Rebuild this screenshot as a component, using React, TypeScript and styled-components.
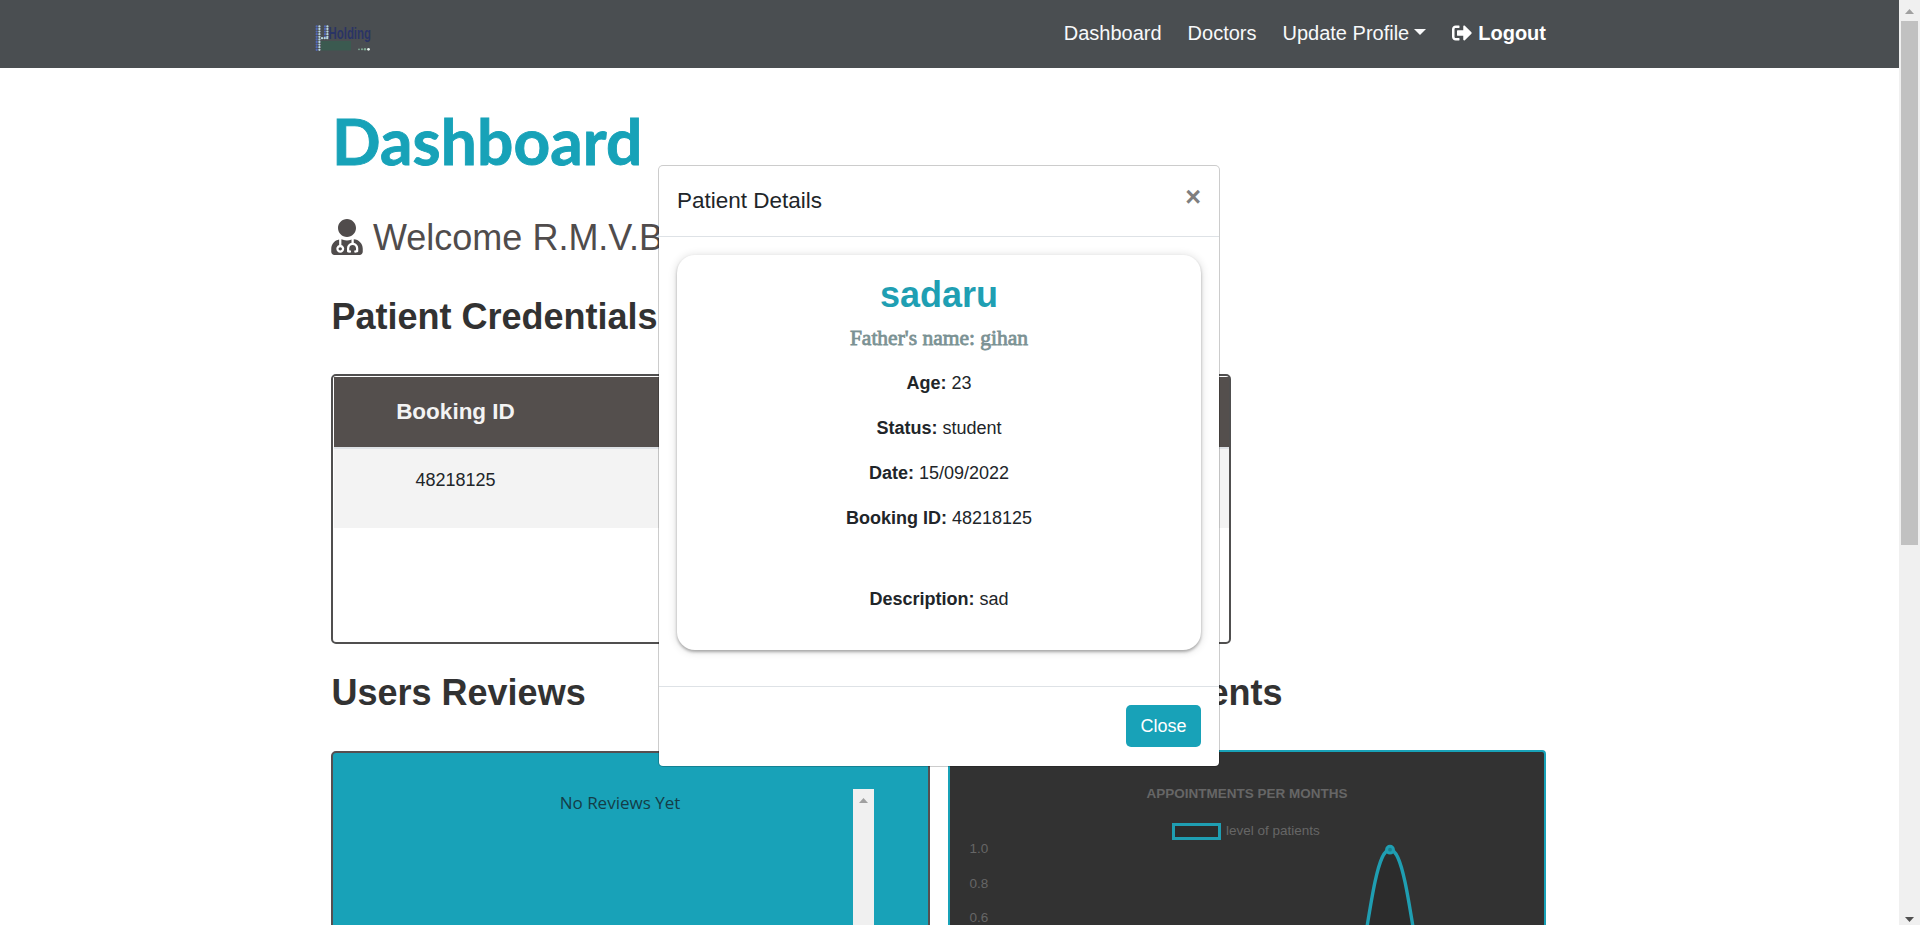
import React from "react";
import styled, { createGlobalStyle } from "styled-components";
import { FaUserMd, FaSignOutAlt } from "react-icons/fa";

const GlobalStyle = createGlobalStyle`
  * { box-sizing: border-box; }
  html, body { margin: 0; height: 925px; overflow: hidden; background: #fff; }
  body { font: 18px/27px "Liberation Sans", Arial, sans-serif; color: #212529; }
  h1, h2, h3, p { margin: 0; }
`;

const Screen = styled.div`
  position: relative;
  display: flex;
  width: 1920px;
  height: 925px;
  overflow: hidden;
`;

const Page = styled.div`
  width: 1899px;
  height: 925px;
  overflow: hidden;
`;

const NavBar = styled.nav`
  display: flex;
  justify-content: space-between;
  align-items: flex-start;
  height: 68px;
  padding: 0 353px 0 314px;
  background: #4a4e51;
`;

const Logo = styled.svg`
  display: block;
  margin-top: 20px;
  overflow: visible;
`;

const NavLinks = styled.div`
  display: flex;
  align-items: center;
  gap: 26px;
  padding-top: 18px;
  font-size: 20px;
  line-height: 30px;
`;

const NavLink = styled.span<{ $strong?: boolean }>`
  display: flex;
  align-items: center;
  font-weight: ${(p) => (p.$strong ? 700 : 400)};
  color: ${(p) => (p.$strong ? "#fff" : "#f8f9fa")};
  svg { margin: 0 6px 1px 0; }
`;

const Caret = styled.i`
  margin: -2px 0 0 5px;
  border: 6px solid transparent;
  border-top-color: #f8f9fa;
  border-bottom: 0;
`;

const Content = styled.main`
  width: 1215px;
  margin-left: 331px;
`;

const PageTitle = styled.h1`
  height: 115px;
  padding: 33px 0 0 1px;
  font: 700 64px/80px Lato, sans-serif;
  letter-spacing: 0.1px;
  color: #17a2b8;
  -webkit-text-stroke: 0.9px #17a2b8;
`;

const Welcome = styled.h2`
  display: flex;
  align-items: center;
  gap: 10px;
  margin: 33px 0 36px;
  font-size: 36px;
  font-weight: 400;
  line-height: 43px;
  color: #504c4c;
  svg { width: 32px; height: 36px; margin-bottom: 2px; }
`;

const SectionTitle = styled.h2`
  padding-left: 0.5px;
  font-size: 36px;
  font-weight: 700;
  line-height: 43px;
  color: #323232;
`;

const TableBox = styled.section`
  width: 900px;
  height: 270px;
  margin: 36px 0 27px;
  padding: 1px 0 0 1px;
  border: 2px solid #504f4f;
  border-radius: 5px;
`;

const TableHead = styled.div`
  display: flex;
  height: 72px;
  padding-top: 18px;
  background: #544f4d;
  border-bottom: 2px solid #dee2e6;
  color: #f3f3f3;
  font-size: 22.5px;
  font-weight: 700;
  line-height: 33px;
`;

const TableRow = styled.div`
  display: flex;
  height: 79px;
  padding-top: 17px;
  background: #f3f3f3;
  line-height: 28px;
`;

const Cell = styled.div`
  width: 243px;
  text-align: center;
`;

const Columns = styled.div`
  display: grid;
  grid-template-columns: 599px 598px;
  column-gap: 18px;
`;

const Reviews = styled.section`
  display: flex;
  height: 400px;
  margin-top: 37px;
  padding: 36px 0 0 54px;
  border: 2px solid #564f50;
  border-radius: 5px;
  background: #18a2b8;
`;

const ReviewText = styled.p`
  width: 466px;
  text-align: center;
  font: 17px/27px "Open Sans", "Noto Sans", sans-serif;
  color: #143d47;
`;

const InnerTrack = styled.div`
  width: 21px;
  background: #f0f0f0;
  svg { display: block; }
`;

const ChartCard = styled.section`
  height: 400px;
  margin-top: 36px;
  border: 2px solid #18a2b8;
  border-radius: 4px;
  background: #323232;
  overflow: hidden;
  svg { display: block; font-family: "Liberation Sans", Arial, sans-serif; font-size: 13.5px; }
`;

const ScrollTrack = styled.div`
  display: flex;
  flex-direction: column;
  align-items: center;
  width: 21px;
  height: 925px;
  background: #f0f0f0;
`;

const ScrollThumb = styled.div`
  width: 17px;
  height: 524px;
  margin-bottom: auto;
  background: #c1c1c1;
`;

const Modal = styled.div`
  position: absolute;
  left: 658px;
  top: 165px;
  display: flex;
  flex-direction: column;
  width: 562px;
  height: 602px;
  border: 1px solid rgba(0, 0, 0, 0.2);
  border-radius: 5px;
  background: #fff;
  background-clip: padding-box;
`;

const ModalHeader = styled.header`
  display: flex;
  justify-content: space-between;
  height: 71px;
  padding: 18px;
  border-bottom: 1px solid #dee2e6;
  font-size: 22.5px;
  line-height: 34px;
`;

const ModalX = styled.span`
  font-size: 27px;
  font-weight: 700;
  line-height: 27px;
  color: #7f7f7f;
`;

const ModalBody = styled.div`
  height: 450px;
  padding: 18px;
  border-bottom: 1px solid #dee2e6;
`;

const PatientCard = styled.div`
  height: 395px;
  padding-top: 18px;
  border-radius: 18px;
  text-align: center;
  box-shadow: 0 2px 3px rgba(0, 0, 0, 0.28), 0 1px 10px rgba(0, 0, 0, 0.16);
`;

const PatientName = styled.h2`
  font-size: 36px;
  font-weight: 700;
  line-height: 43px;
  color: #1f9fb3;
`;

const FatherName = styled.h3`
  margin: 9px 0 19px;
  font: 400 21.5px/26px "Liberation Serif", serif;
  color: #7b9294;
  -webkit-text-stroke: 0.8px #7b9294;
`;

const Detail = styled.p<{ $gap?: number }>`
  margin-bottom: ${(p) => p.$gap ?? 18}px;
`;

const ModalFooter = styled.footer`
  display: flex;
  justify-content: flex-end;
  padding: 18px;
`;

const CloseButton = styled.button`
  width: 75px;
  height: 42px;
  padding: 0;
  border: 0;
  border-radius: 5px;
  background: #18a2b8;
  color: #fff;
  font: 18px/27px "Liberation Sans", Arial, sans-serif;
`;

type Dot = { x: number; y: number; light: boolean };

const muDots: Dot[] = [];
for (let row = 0; row < 10; row++) {
  const y = 6.4 + row * 2.6;
  muDots.push({ x: 2.7, y, light: false }, { x: 5.4, y, light: true });
  if (row < 5) muDots.push({ x: 11, y, light: false }, { x: 13.4, y, light: true });
}
for (const x of [8, 10.7, 13.2]) muDots.push({ x, y: 18.2, light: true });

export default function App() {
  return (
    <>
      <GlobalStyle />
      <Screen>
        <Page>
          <NavBar>
            <Logo width="64" height="36" viewBox="0 0 64 36">
              <rect x="7" y="21" width="30" height="9.500" fill="#3b5a50" />
              {muDots.map((d, i) => (
                <circle key={i} cx={d.x} cy={d.y} r="1.15" fill={d.light ? "#b9d6e0" : "#5268b8"} />
              ))}
              <text x="14.500" y="18.800" textLength="42.500" lengthAdjust="spacingAndGlyphs" fontFamily="Liberation Sans" fontWeight="700" fontSize="17" fill="#2a3465">Holding</text>
              {[45, 48, 51, 54.5].map((x, i) => (
                <circle key={x} cx={x} cy="29.300" r={0.9 + i * 0.15} fill={i === 3 ? "#e8f4ee" : "#7fa893"} />
              ))}
            </Logo>
            <NavLinks>
              <NavLink>Dashboard</NavLink>
              <NavLink>Doctors</NavLink>
              <NavLink>Update Profile<Caret /></NavLink>
              <NavLink $strong><FaSignOutAlt size={20} />Logout</NavLink>
            </NavLinks>
          </NavBar>
          <Content>
            <PageTitle>Dashboard</PageTitle>
            <Welcome><FaUserMd />Welcome R.M.V.B</Welcome>
            <SectionTitle>Patient Credentials</SectionTitle>
            <TableBox>
              <TableHead><Cell>Booking ID</Cell></TableHead>
              <TableRow><Cell>48218125</Cell></TableRow>
            </TableBox>
            <Columns>
              <div>
                <SectionTitle>Users Reviews</SectionTitle>
                <Reviews>
                  <ReviewText>No Reviews Yet</ReviewText>
                  <InnerTrack>
                    <svg width="21" height="21"><path d="M6 14h9l-4.500-5z" fill="#a0a0a0" /></svg>
                  </InnerTrack>
                </Reviews>
              </div>
              <div>
                <SectionTitle>Total Appointments</SectionTitle>
                <ChartCard>
                  <svg width="594" height="396" viewBox="950 752 594 396">
                    <text x="1247" y="798" textAnchor="middle" fontWeight="700" fill="#666">APPOINTMENTS PER MONTHS</text>
                    <rect x="1173.500" y="824.500" width="46" height="14" fill="rgba(0,0,0,.1)" stroke="#1f9eb2" strokeWidth="3" />
                    <text x="1226" y="835" fill="#666">level of patients</text>
                    <text x="969.500" y="853" fill="#666">1.0</text>
                    <text x="969.500" y="887.500" fill="#666">0.8</text>
                    <text x="969.500" y="922" fill="#666">0.6</text>
                    <path d="M1352 1024C1371 900 1377 849.700 1390 849.700S1409 900 1428 1024" fill="rgba(0,0,0,.1)" stroke="#1f9eb2" strokeWidth="3.400" />
                    <circle cx="1390" cy="849.700" r="3.400" fill="#17808f" stroke="#1f9eb2" strokeWidth="3" />
                  </svg>
                </ChartCard>
              </div>
            </Columns>
          </Content>
        </Page>
        <ScrollTrack>
          <svg width="21" height="21"><path d="M6 14h9l-4.500-5z" fill="#a0a0a0" /></svg>
          <ScrollThumb />
          <svg width="21" height="21"><path d="M6 13h9l-4.500 5z" fill="#505050" /></svg>
        </ScrollTrack>
        <Modal>
          <ModalHeader>Patient Details<ModalX>×</ModalX></ModalHeader>
          <ModalBody>
            <PatientCard>
              <PatientName>sadaru</PatientName>
              <FatherName>Father's name: gihan</FatherName>
              <Detail><b>Age:</b> 23</Detail>
              <Detail><b>Status:</b> student</Detail>
              <Detail><b>Date:</b> 15/09/2022</Detail>
              <Detail $gap={54}><b>Booking ID:</b> 48218125</Detail>
              <Detail><b>Description:</b> sad</Detail>
            </PatientCard>
          </ModalBody>
          <ModalFooter><CloseButton>Close</CloseButton></ModalFooter>
        </Modal>
      </Screen>
    </>
  );
}
